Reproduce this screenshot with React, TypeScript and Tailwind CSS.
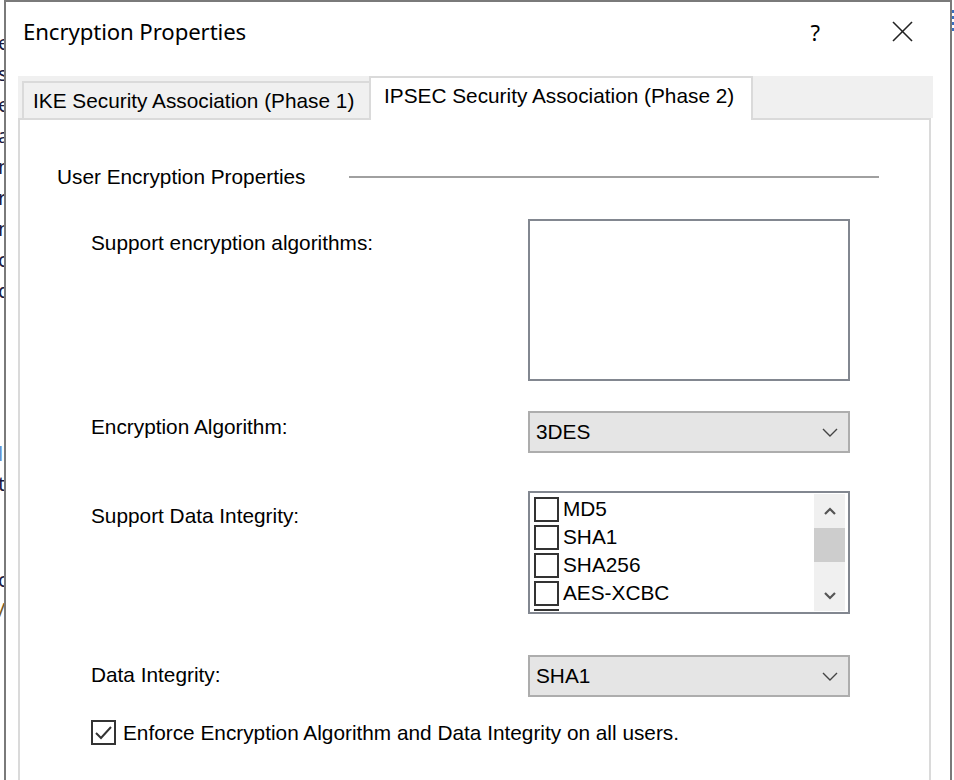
import React from "react";

const Chevron = ({ up = false, bold = false }: { up?: boolean; bold?: boolean }) => (
  <svg width={bold ? 14 : 16} height={bold ? 9 : 9} viewBox={bold ? "0 0 14 9" : "0 0 16 9"}>
    {bold ? (
      <polyline
        points={up ? "2,7 7,2 12,7" : "2,2 7,7 12,2"}
        fill="none"
        stroke="#555"
        strokeWidth="2.2"
      />
    ) : (
      <polyline points="1,1 8,8 15,1" fill="none" stroke="#444" strokeWidth="1.4" />
    )}
  </svg>
);

const Combo = ({ value }: { value: string }) => (
  <div className="flex h-[42px] w-[322px] items-center justify-between border-2 border-[#adadad] bg-[#e5e5e5] pl-[6px] pr-[10px]">
    <span className="leading-[24px]">{value}</span>
    <Chevron />
  </div>
);

const Box = ({ checked = false }: { checked?: boolean }) => (
  <div className="flex h-[25px] w-[25px] shrink-0 items-center justify-center border-2 border-[#333333] bg-white">
    {checked && (
      <svg width="21" height="21" viewBox="0 0 21 21">
        <polyline points="3,11 8,16 18,5" fill="none" stroke="#333" strokeWidth="2" />
      </svg>
    )}
  </div>
);

export default function App() {
  const bgLetters = ["e", "s", "e", "a", "m", "r", "n", "c", "d"];
  return (
    <div className="relative h-[780px] w-[954px] overflow-hidden bg-white font-['Liberation_Sans',Arial,sans-serif] text-[20.8px] text-black">
      {/* background window fragments */}
      <div className="absolute left-[-2px] top-[27px] flex w-[8px] flex-col font-['Noto_Sans',sans-serif] text-[20px] text-[#1a1a40]">
        {bgLetters.map((l, i) => (
          <div key={i} className="h-[31px] leading-[31px]">
            {l}
          </div>
        ))}
        <div className="mt-[133px] h-[30px] leading-[30px] text-[#5b8fd0]">l</div>
        <div className="h-[30px] leading-[30px]">ti</div>
        <div className="mt-[66px] h-[30px] leading-[30px]">c</div>
        <div className="h-[30px] leading-[30px] text-[#7a5a20]">/</div>
      </div>
      <div className="absolute right-0 top-[10px] flex w-[3px] flex-col gap-[3px]">
        <div className="h-[3px] bg-[#3b6fc0]" />
        <div className="h-[3px] bg-[#3b6fc0]" />
        <div className="h-[3px] bg-[#3b6fc0]" />
        <div className="h-[3px] bg-[#3b6fc0]" />
      </div>

      {/* dialog window */}
      <div className="absolute left-[4px] top-0 h-[820px] w-[948px] border-x-2 border-t-2 border-[#7a7a7a] bg-white">
        {/* title bar */}
        <div className="flex h-[59px] items-center justify-between pl-[17px]">
          <span className="font-['Noto_Sans',sans-serif] text-[22.2px] leading-[28px] tracking-[-0.1px]">
            Encryption Properties
          </span>
          <div className="flex items-center">
            <span className="mr-[72px] font-['Noto_Sans',sans-serif] text-[22px] leading-[28px]">?</span>
            <svg width="21" height="21" viewBox="0 0 21 21" className="mr-[37px]">
              <line x1="1" y1="1" x2="20" y2="20" stroke="#222" strokeWidth="1.6" />
              <line x1="20" y1="1" x2="1" y2="20" stroke="#222" strokeWidth="1.6" />
            </svg>
          </div>
        </div>

        {/* tab control */}
        <div className="ml-[12px] mt-[15px] w-[915px]">
          <div className="flex h-[42px] items-end bg-[#f0f0f0]">
            <div className="ml-[4px] flex h-[37px] w-[347px] items-center border-l-2 border-t-2 border-[#dadada] bg-[#f0f0f0] pl-[9px] leading-[24px]">
              IKE Security Association (Phase 1)
            </div>
            <div className="relative z-10 -mb-[2px] flex h-[44px] w-[384px] items-start border-x-2 border-t-2 border-[#dadada] bg-white pl-[13px] pt-[6px] leading-[24px]">
              IPSEC Security Association (Phase 2)
            </div>
          </div>
          <div className="mr-[2px] h-[700px] border-2 border-[#dadada] bg-white">
            {/* group header */}
            <div className="mt-[45px] flex items-center pl-[37px]">
              <span className="leading-[24px]">User Encryption Properties</span>
              <div className="ml-[43px] h-[2px] w-[530px] bg-[#a0a0a0]" />
            </div>

            <div className="pl-[71px]">
              {/* row 1 */}
              <div className="mt-[30px] flex">
                <div className="w-[437px] pt-[12px] leading-[24px]">Support encryption algorithms:</div>
                <div className="h-[162px] w-[322px] border-2 border-[#828790] bg-white" />
              </div>

              {/* row 2 */}
              <div className="mt-[30px] flex">
                <div className="w-[437px] pt-[4px] leading-[24px]">Encryption Algorithm:</div>
                <Combo value="3DES" />
              </div>

              {/* row 3 */}
              <div className="mt-[38px] flex">
                <div className="w-[437px] pt-[13px] leading-[24px]">Support Data Integrity:</div>
                <div className="flex h-[123px] w-[322px] border-2 border-[#828790] bg-white p-[1px]">
                  <div className="flex-1 overflow-hidden pl-[3px] pt-[1px]">
                    {["MD5", "SHA1", "SHA256", "AES-XCBC", "AES-CMAC"].map((t) => (
                      <div key={t} className="flex h-[28px] items-center gap-[4px]">
                        <Box />
                        <span className="leading-[24px]">{t}</span>
                      </div>
                    ))}
                  </div>
                  <div className="mr-[2px] flex w-[31px] flex-col items-center bg-[#f0f0f0] pt-[1px]">
                    <div className="flex h-[33px] items-center">
                      <Chevron up bold />
                    </div>
                    <div className="h-[34px] w-full bg-[#cdcdcd]" />
                    <div className="flex-1" />
                    <div className="flex h-[32px] items-center">
                      <Chevron bold />
                    </div>
                  </div>
                </div>
              </div>

              {/* row 4 */}
              <div className="mt-[41px] flex">
                <div className="w-[437px] pt-[8px] leading-[24px]">Data Integrity:</div>
                <Combo value="SHA1" />
              </div>

              {/* row 5 */}
              <div className="mt-[23px] flex items-center gap-[7px]">
                <Box checked />
                <span className="leading-[24px]">
                  Enforce Encryption Algorithm and Data Integrity on all users.
                </span>
              </div>
            </div>
          </div>
        </div>
      </div>
    </div>
  );
}
